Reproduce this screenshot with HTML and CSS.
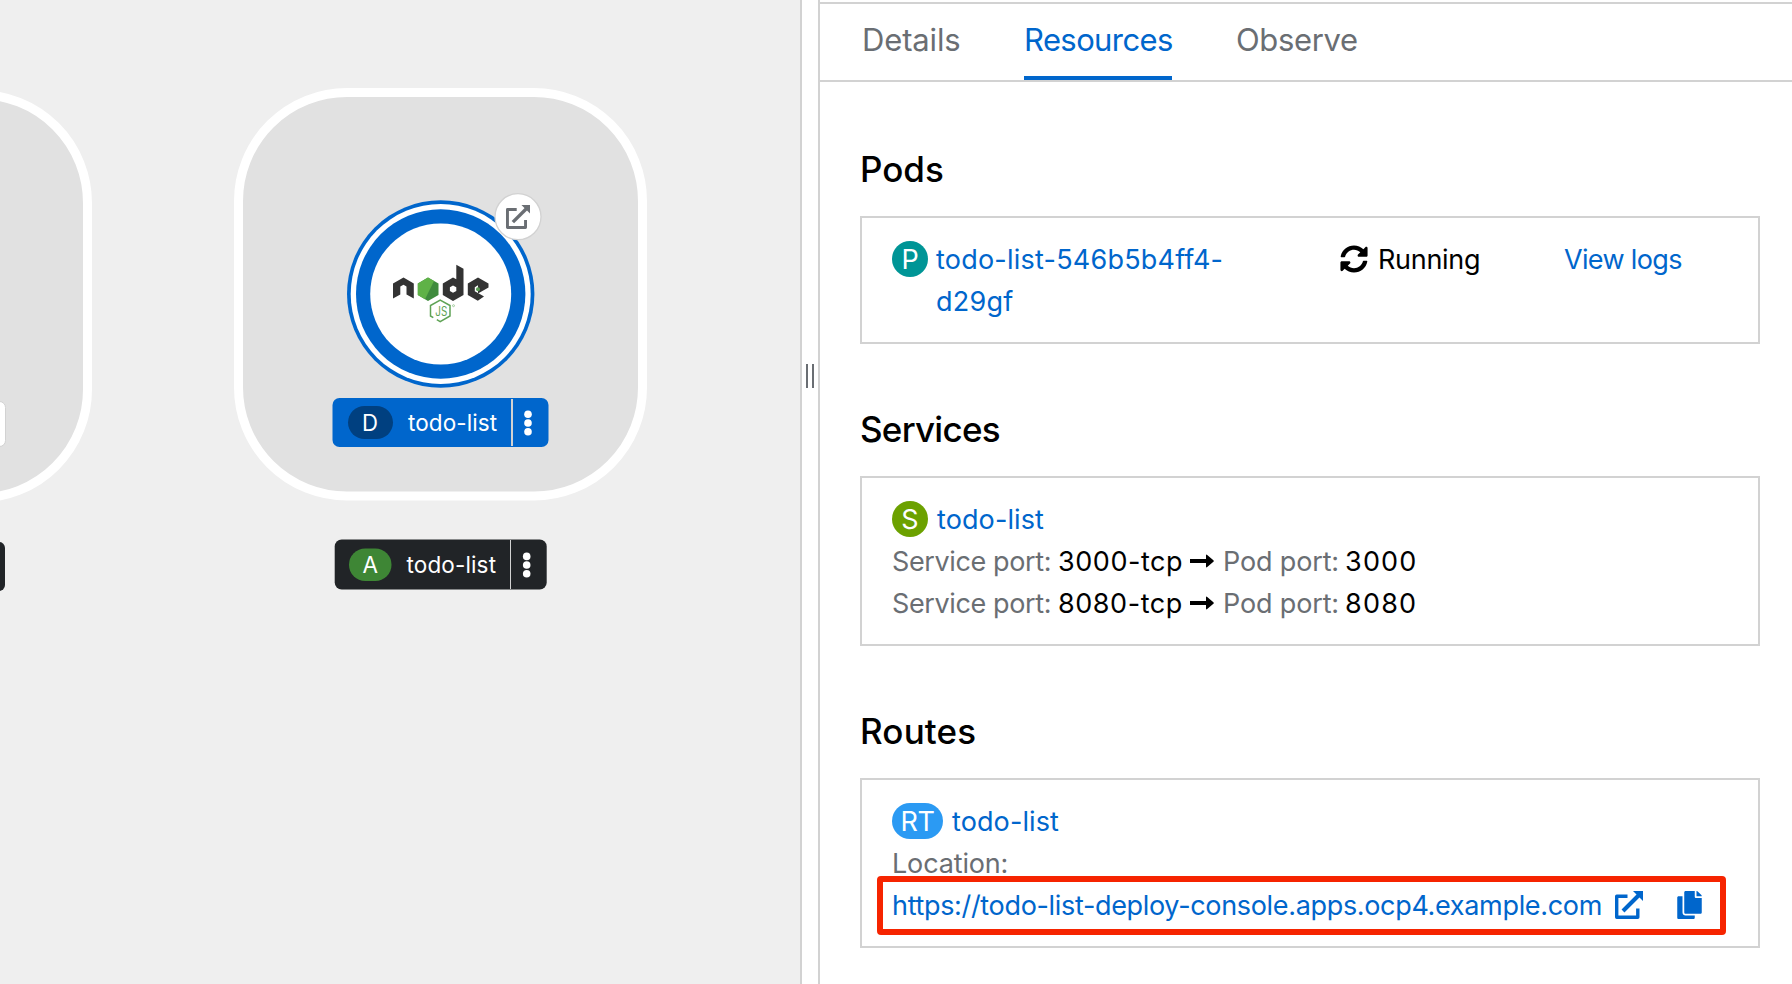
FILE: index.html
```
<!DOCTYPE html>
<html lang="en">
<head>
<meta charset="utf-8">
<title>Topology</title>
<link rel="stylesheet" href="styles.css">
</head>
<body>
<div class="app">
  <main class="canvas">
    <svg class="topology" width="798" height="984" viewBox="0 0 798 984">
      <rect class="group" x="-316.5" y="94.5" width="404" height="403.500" rx="108.500"/>
      <rect class="label-plain" x="-60" y="401.500" width="65.500" height="45" rx="6"/>
      <rect class="label-dark" x="-60" y="542" width="65" height="49" rx="6"/>
      <rect class="group" x="238.500" y="92.500" width="404" height="403.500" rx="108.500"/>
      <circle cx="440.700" cy="294" r="93.700" fill="#06c"/>
      <circle cx="440.700" cy="294" r="90" fill="#fff"/>
      <circle cx="440.700" cy="294" r="84.700" fill="#06c"/>
      <circle cx="440.700" cy="294" r="70.500" fill="#fff"/>
      <g class="node-logo">
        <path fill="#333" d="M393 298.500V283.500L403.500 277.500L413.800 283.500V298.500L406.500 294.500V286.500L403.500 284.700L400.300 286.500V294.500Z"/>
        <path fill="#3f8b3d" d="M428 277.500L438.500 283.500V295L428 301L417.800 295V283.500Z"/>
        <path fill="#5fb247" d="M428 277.500L434 281L425 299.300L417.800 295V283.500Z"/>
        <path fill="#333" fill-rule="evenodd" d="M456.300 264.800L463.500 268.800V295L453 301L442.800 295V283.500L453 277.500L456.300 279.200ZM453 285.500L449.900 287.300V291L453 292.800L456.300 291V287.300Z"/>
        <path fill="#333" d="M478 277.500L488.500 283.500V287.500L478 293.500V285.300L474.800 287.200V291.200L481.500 295L484 296.500L477.800 300.800L467.800 295V283.500Z"/>
        <circle cx="478" cy="289.300" r="2" fill="#5a9c53"/>
        <path class="js-hex" d="M433.300 317.600L430.500 316V305.500L440.200 300L450 305.500V316L440.200 321.700L436.800 319.700"/>
        <text class="js-text" x="435.300" y="315.500" textLength="12" lengthAdjust="spacingAndGlyphs">JS</text>
        <circle cx="453.500" cy="305.700" r="1" fill="none" stroke="#5fa355" stroke-width=".5"/>
      </g>
      <circle cx="518" cy="216.700" r="23" fill="#fff" stroke="#d2d2d2" stroke-width="1.300"/>
      <rect class="label-blue" x="332.500" y="398" width="216" height="49" rx="7"/>
      <rect x="348" y="406" width="45" height="33" rx="16.500" fill="#004080"/>
      <text class="label-text" x="362" y="430.500" textLength="16" lengthAdjust="spacingAndGlyphs">D</text>
      <text class="label-text" x="408" y="431" textLength="89">todo-list</text>
      <path d="M512 399V446" stroke="#d2d2d2" stroke-width="2"/>
      <g fill="#fff"><circle cx="528" cy="414.300" r="3.800"/><circle cx="528" cy="423" r="3.800"/><circle cx="528" cy="431.700" r="3.800"/></g>
      <rect class="label-dark" x="334.700" y="539.500" width="212" height="50" rx="7"/>
      <rect x="349" y="548.500" width="42.500" height="32.500" rx="16.250" fill="#3e8635"/>
      <text class="label-text" x="362.500" y="572.500" textLength="15.500" lengthAdjust="spacingAndGlyphs">A</text>
      <text class="label-text" x="406.500" y="573" textLength="89.500">todo-list</text>
      <path d="M510.500 540V589" stroke="#d2d2d2"/>
      <g fill="#fff"><circle cx="526.700" cy="556.400" r="3.800"/><circle cx="526.700" cy="565" r="3.800"/><circle cx="526.700" cy="573.700" r="3.800"/></g>
      <svg x="506" y="205" width="24" height="24" viewBox="0 0 28 28" color="#6a6e73"><use href="#external"/></svg>
    </svg>
  </main>
  <div class="splitter"><i></i><i></i></div>
  <aside class="panel">
    <nav class="tabs">
      <a class="tab tab-details"><span>Details</span></a>
      <a class="tab tab-resources active"><span>Resources</span></a>
      <a class="tab tab-observe"><span>Observe</span></a>
    </nav>
    <div class="content">
      <section>
        <h2>Pods</h2>
        <div class="card pod">
          <div class="resource"><b class="badge pod-badge">P</b><a class="pod-name">todo-list-546b5b4ff4-<br>d29gf</a></div>
          <div class="status"><svg width="28" height="28" viewBox="0 0 512 512"><path fill="currentColor" d="M370.720 133.280C339.458 104.008 298.888 87.962 255.848 88c-77.458.068-144.328 53.178-162.791 126.850-1.344 5.363-6.122 9.150-11.651 9.150H24.103c-7.498 0-13.194-6.807-11.807-14.176C33.933 94.924 134.813 8 256 8c66.448 0 126.791 26.136 171.315 68.685L463.030 40.970C478.149 25.851 504 36.559 504 57.941V192c0 13.255-10.745 24-24 24H345.941c-21.382 0-32.090-25.851-16.971-40.971l41.750-41.749zM32 296h134.059c21.382 0 32.090 25.851 16.971 40.971l-41.750 41.750c31.262 29.273 71.835 45.319 114.876 45.280 77.418-.070 144.315-53.144 162.787-126.849 1.344-5.363 6.122-9.150 11.651-9.150h57.304c7.498 0 13.194 6.807 11.807 14.176C478.067 417.076 377.187 504 256 504c-66.448 0-126.791-26.136-171.315-68.685L48.970 471.030C33.851 486.149 8 475.441 8 454.059V320c0-13.255 10.745-24 24-24z"/></svg><span>Running</span></div>
          <a class="logs">View logs</a>
        </div>
      </section>
      <section>
        <h2 class="h-services">Services</h2>
        <div class="card">
          <div class="resource"><b class="badge service-badge">S</b><a>todo-list</a></div>
          <div class="port"><span class="muted">Service port:</span><span class="value">3000-tcp</span><svg class="arrow" viewBox="0 0 24 14"><path d="M0 5H16V1.500Q16 0 17.200 1L23.400 6.200Q24.200 7 23.400 7.800L17.200 13Q16 14 16 12.500V9H0Z"/></svg><span class="muted pod-port">Pod port:</span><span class="num">3000</span></div>
          <div class="port"><span class="muted">Service port:</span><span class="value">8080-tcp</span><svg class="arrow" viewBox="0 0 24 14"><path d="M0 5H16V1.500Q16 0 17.200 1L23.400 6.200Q24.200 7 23.400 7.800L17.200 13Q16 14 16 12.500V9H0Z"/></svg><span class="muted pod-port">Pod port:</span><span class="num">8080</span></div>
        </div>
      </section>
      <section>
        <h2 class="h-routes">Routes</h2>
        <div class="card">
          <div class="resource"><b class="badge route-badge">RT</b><a>todo-list</a></div>
          <div class="muted location">Location:</div>
          <div class="url"><a>https://todo-list-deploy-console.apps.ocp4.example.com</a>
            <svg class="open" width="28" height="28" viewBox="0 0 28 28"><g id="external"><path fill="none" stroke="currentColor" stroke-width="3.400" stroke-linejoin="round" d="M12.500 5.200H1.700V26.300H22.800V17.500"/><path fill="none" stroke="currentColor" stroke-width="4" d="M8 20L24 4"/><path fill="currentColor" d="M18 0H28V10Z"/></g></svg>
            <svg class="copy" width="25" height="28" viewBox="0 0 448 512"><path fill="currentColor" d="M320 448v40c0 13.255-10.745 24-24 24H24c-13.255 0-24-10.745-24-24V120c0-13.255 10.745-24 24-24h72v296c0 30.879 25.121 56 56 56h168zm0-344V0H152c-13.255 0-24 10.745-24 24v368c0 13.255 10.745 24 24 24h272c13.255 0 24-10.745 24-24V128H344c-13.200 0-24-10.800-24-24zm120.971-31.029L375.029 7.029A24 24 0 0 0 358.059 0H352v96h96v-6.059a24 24 0 0 0-7.029-16.970z"/></svg>
            <div class="highlight"></div>
          </div>
        </div>
      </section>
    </div>
  </aside>
</div>
</body>
</html>
```
FILE: styles.css
```
* { box-sizing: border-box; }
body { margin: 0; font-family: Inter, "Liberation Sans", sans-serif; font-size: 27px; line-height: 42px; color: #000; background: #fff; }
.app { display: flex; width: 1792px; height: 984px; overflow: hidden; }
.canvas { width: 800px; height: 984px; background: #efefef; }
.topology { display: block; }
.group { fill: #e1e1e1; stroke: #fff; stroke-width: 9px; }
.label-plain { fill: #fff; stroke: #d2d2d2; stroke-width: 1px; }
.label-dark { fill: #212427; }
.label-blue { fill: #06c; }
.label-text { fill: #fff; font-size: 22.500px; }
.js-hex { fill: none; stroke: #5fa355; stroke-width: 1.500px; }
.js-text { fill: #5fa355; font-size: 12.500px; }
.splitter { width: 18px; border-left: 2px solid #d2d2d2; display: flex; align-items: center; justify-content: center; gap: 4px; padding-bottom: 232px; }
.splitter i { width: 2px; height: 24px; background: #6a6e73; }
.panel { flex: 1; border-left: 2px solid #d2d2d2; padding-top: 2px; }
.tabs { display: flex; height: 80px; border-top: 2px solid #d2d2d2; border-bottom: 2px solid #d2d2d2; padding-left: 42px; gap: 64px; font-size: 31px; }
.tab { height: 76px; color: #6a6e73; display: flex; padding-top: 15px; white-space: nowrap; }
.tab-details { width: 98px; letter-spacing: -.15px; }
.tab-resources { width: 148px; letter-spacing: -.6px; }
.tab-observe { letter-spacing: -.35px; }
.tab.active { color: #06c; border-bottom: 4px solid #06c; }
.content { padding: 0 32px 0 40px; }
section { height: 256px; padding-top: 62px; }
section + section { height: 302px; padding-top: 66px; }
h2 { margin: 0 0 22px; font-size: 35px; font-weight: 500; line-height: 50px; white-space: nowrap; }
.h-services { letter-spacing: -.75px; }
.h-routes { letter-spacing: .15px; }
.card { border: 2px solid #d2d2d2; padding: 20px 30px; }
.pod { display: flex; }
.pod .resource { width: 448px; height: 84px; }
.resource { display: flex; gap: 9px; color: #06c; height: 42px; }
.resource a { padding-top: 1px; letter-spacing: .1px; }
.resource .pod-name { letter-spacing: .22px; margin-left: -1px; }
.badge { height: 36px; width: 36px; margin-top: 3px; border-radius: 18px; color: #fff; text-align: center; font-weight: 400; line-height: 37px; }
.pod-badge { background: #009596; }
.service-badge { background: #6ca100; }
.route-badge { background: #2b9af3; width: 51px; letter-spacing: -.5px; }
.status { width: 224px; display: flex; gap: 10px; letter-spacing: -.3px; }
.status span { padding-top: 1px; }
.status svg { margin-top: 7px; }
.logs { color: #06c; letter-spacing: -.65px; padding-top: 1px; }
.port { display: flex; white-space: nowrap; height: 42px; line-height: 44px; }
.muted { color: #6a6e73; }
.port .muted { width: 166px; letter-spacing: -.38px; }
.value { width: 132px; letter-spacing: .55px; }
.arrow { width: 24px; height: 14px; margin: 14px 9px 0 0; }
.port .pod-port { width: 122px; letter-spacing: -.15px; }
.num { letter-spacing: 1.200px; }
.location { line-height: 44px; height: 42px; letter-spacing: -.15px; }
.url { position: relative; display: flex; color: #06c; white-space: nowrap; line-height: 44px; height: 42px; }
.url > a { width: 723px; letter-spacing: -.33px; }
.open { margin: 7px 34px 0 0; }
.copy { margin-top: 7px; }
.highlight { position: absolute; left: -15.500px; top: -8px; width: 849px; height: 59px; border: 6px solid #f62400; border-radius: 4px; }
```
